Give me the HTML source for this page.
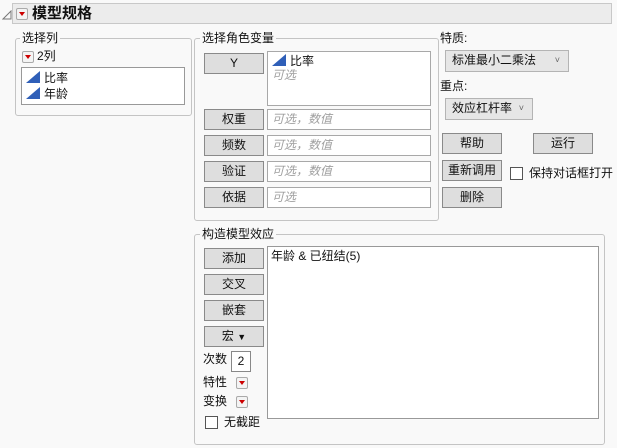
<!DOCTYPE html>
<html><head><meta charset="utf-8"><style>
body{margin:0;width:617px;height:448px;background:#f9f9f9;font-family:"Liberation Sans","Noto Sans CJK SC",sans-serif;font-size:12px;color:#111;position:relative;overflow:hidden}
.a{position:absolute}
.btn{position:absolute;background:#dedede;border:1px solid #8a8a8a;box-sizing:border-box;text-align:center;font-size:12px;line-height:18px}
.box{position:absolute;background:#fff;border:1px solid #a8a8a8;box-sizing:border-box}
.fs{position:absolute;border:1px solid #c4c4c4;border-radius:3px;box-sizing:border-box}
.lg{position:absolute;background:#f9f9f9;padding:0 2px;font-size:12px;line-height:14px}
.ph{color:#a0a0a0;font-style:italic;padding-left:4px;line-height:18px}
.rb{position:absolute;width:12px;height:12px;box-sizing:border-box;border:1px solid #aaa;border-radius:2px;background:#f4f4f4}
.rb:after{content:"";position:absolute;left:2px;top:3px;border-left:3px solid transparent;border-right:3px solid transparent;border-top:4px solid #c00}
.tri{display:inline-block;width:0;height:0;border-left:14px solid transparent;border-bottom:12px solid #2f5fb8;vertical-align:-1px;margin-right:4px}
.dd{position:absolute;background:#e6e6e6;border:1px solid #b4b4b4;box-sizing:border-box;line-height:19px;padding-left:6px}
.cb{position:absolute;width:13px;height:13px;background:#fff;border:1px solid #555;box-sizing:border-box}
</style></head><body>
<svg class="a" style="left:2px;top:10px" width="10" height="10"><path d="M1 9 L9 1 L9 9 Z" fill="none" stroke="#777"/></svg>
<div class="a" style="left:12px;top:3px;width:600px;height:21px;background:#ececec;border:1px solid #c8c8c8;box-sizing:border-box"></div>
<div class="rb" style="left:16px;top:8px"></div>
<div class="a" style="left:32px;top:4px;font-size:15px;font-weight:bold;line-height:20px">模型规格</div>

<div class="fs" style="left:15px;top:38px;width:177px;height:78px"></div>
<div class="lg" style="left:20px;top:31px">选择列</div>
<div class="rb" style="left:22px;top:51px"></div>
<div class="a" style="left:37px;top:49px;line-height:14px">2列</div>
<div class="box" style="left:21px;top:67px;width:164px;height:38px;border-color:#999"></div>
<div class="a" style="left:26px;top:70px;line-height:16px"><span class="tri"></span>比率<br><span class="tri"></span>年龄</div>

<div class="fs" style="left:194px;top:38px;width:245px;height:183px"></div>
<div class="lg" style="left:200px;top:31px">选择角色变量</div>
<div class="btn" style="left:204px;top:53px;width:60px;height:21px">Y</div>
<div class="box" style="left:267px;top:51px;width:164px;height:55px"><div style="padding:2px 0 0 4px;line-height:15px"><span class="tri"></span>比率</div><div class="ph" style="line-height:13px">可选</div></div>
<div class="btn" style="left:204px;top:109px;width:60px;height:21px">权重</div>
<div class="box" style="left:267px;top:109px;width:164px;height:21px"><div class="ph">可选，数值</div></div>
<div class="btn" style="left:204px;top:135px;width:60px;height:21px">频数</div>
<div class="box" style="left:267px;top:135px;width:164px;height:21px"><div class="ph">可选，数值</div></div>
<div class="btn" style="left:204px;top:161px;width:60px;height:21px">验证</div>
<div class="box" style="left:267px;top:161px;width:164px;height:21px"><div class="ph">可选，数值</div></div>
<div class="btn" style="left:204px;top:187px;width:60px;height:21px">依据</div>
<div class="box" style="left:267px;top:187px;width:164px;height:21px"><div class="ph">可选</div></div>

<div class="a" style="left:440px;top:29px">特质:</div>
<div class="dd" style="left:445px;top:50px;width:124px;height:22px">标准最小二乘法<span style="position:absolute;right:8px;font-size:9px;color:#666">˅</span></div>
<div class="a" style="left:440px;top:77px">重点:</div>
<div class="dd" style="left:445px;top:98px;width:88px;height:22px">效应杠杆率<span style="position:absolute;right:8px;font-size:9px;color:#666">˅</span></div>
<div class="btn" style="left:442px;top:133px;width:60px;height:21px">帮助</div>
<div class="btn" style="left:533px;top:133px;width:60px;height:21px">运行</div>
<div class="btn" style="left:442px;top:160px;width:60px;height:21px">重新调用</div>
<div class="cb" style="left:510px;top:167px"></div>
<div class="a" style="left:529px;top:165px;line-height:16px">保持对话框打开</div>
<div class="btn" style="left:442px;top:187px;width:60px;height:21px">删除</div>

<div class="fs" style="left:194px;top:234px;width:411px;height:211px"></div>
<div class="lg" style="left:200px;top:227px">构造模型效应</div>
<div class="btn" style="left:204px;top:248px;width:60px;height:21px">添加</div>
<div class="btn" style="left:204px;top:274px;width:60px;height:21px">交叉</div>
<div class="btn" style="left:204px;top:300px;width:60px;height:21px">嵌套</div>
<div class="btn" style="left:204px;top:326px;width:60px;height:21px">宏 <span style="font-size:9px">▼</span></div>
<div class="a" style="left:203px;top:351px;line-height:16px">次数</div>
<div class="box" style="left:231px;top:351px;width:20px;height:21px;text-align:center;line-height:19px;border-color:#888">2</div>
<div class="a" style="left:203px;top:374px;line-height:16px">特性</div>
<div class="rb" style="left:236px;top:377px"></div>
<div class="a" style="left:203px;top:393px;line-height:16px">变换</div>
<div class="rb" style="left:236px;top:396px"></div>
<div class="cb" style="left:205px;top:416px"></div>
<div class="a" style="left:224px;top:414px;line-height:16px">无截距</div>
<div class="box" style="left:267px;top:246px;width:332px;height:173px;border-color:#999"><div style="padding:1px 0 0 3px;line-height:16px">年龄 &amp; 已纽结(5)</div></div>
</body></html>
